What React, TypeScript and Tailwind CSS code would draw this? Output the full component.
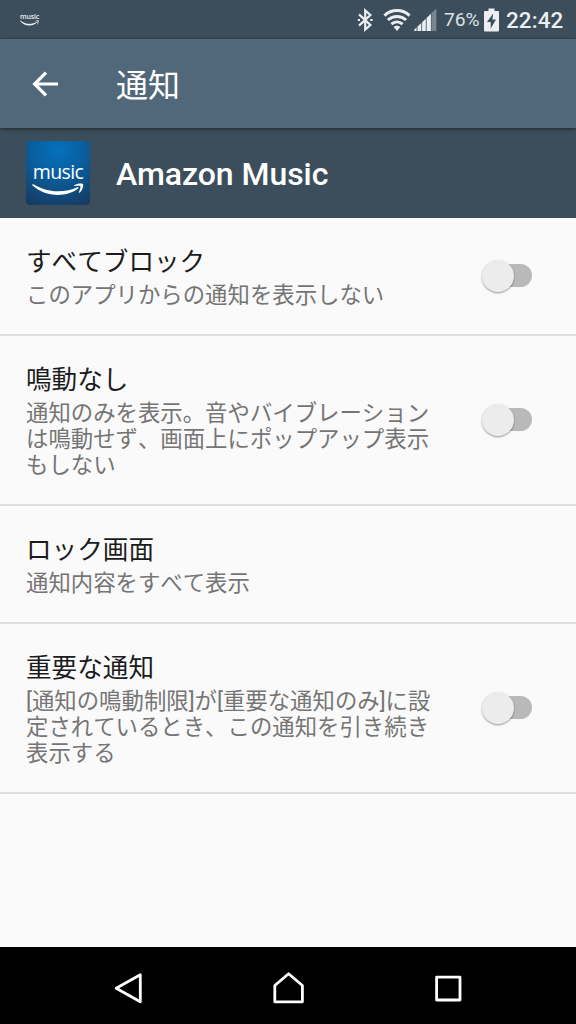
type Setting = {
  title: string;
  lines: string[];
  height: string;
  toggle: boolean;
};

const settings: Setting[] = [
  {
    title: "すべてブロック",
    lines: ["このアプリからの通知を表示しない"],
    height: "h-[118px]",
    toggle: true,
  },
  {
    title: "鳴動なし",
    lines: [
      "通知のみを表示。音やバイブレーション",
      "は鳴動せず、画面上にポップアップ表示",
      "もしない",
    ],
    height: "h-[170px]",
    toggle: true,
  },
  {
    title: "ロック画面",
    lines: ["通知内容をすべて表示"],
    height: "h-[118px]",
    toggle: false,
  },
  {
    title: "重要な通知",
    lines: [
      "[通知の鳴動制限]が[重要な通知のみ]に設",
      "定されているとき、この通知を引き続き",
      "表示する",
    ],
    height: "h-[170px]",
    toggle: true,
  },
];

function Smile({ className }: { className: string }) {
  return (
    <svg viewBox="0 0 52 13" preserveAspectRatio="none" className={className} fill="currentColor">
      <path d="M0.3 1.6C0.7 1 1.2 1.1 1.8 1.5C9 5.8 17 8.3 26 8.3C33 8.3 40 6.6 45.3 4.2C46.3 3.8 47 4.9 46.1 5.6C41 9.7 33.5 12 26 12C16 12 7 8.2 0.6 2.5C0.2 2.1 0.1 1.9 0.3 1.6Z" />
      <path d="M42.3 2.3C45 0.4 49.4 0.2 50.8 0.9C52 1.6 50.7 6.8 47.8 9.5C47.2 10 46.7 9.7 46.9 9.1C47.7 7.2 48.9 4.1 48.4 3.2C47.8 2.3 44.9 2.8 43 3C42.2 3.1 41.8 2.7 42.3 2.3Z" />
    </svg>
  );
}

function StatusBar() {
  return (
    <div className="flex h-[39px] items-center bg-[#3c4e5b] pl-5 text-[#eceff1]">
      <div className="flex w-[19px] flex-col items-center">
        <span className="font-['Open_Sans',sans-serif] text-[7px] font-semibold leading-[7px] tracking-[-0.2px]">
          music
        </span>
        <Smile className="h-[6px] w-[19px]" />
      </div>
      <svg viewBox="0 0 17 24" className="ml-[318px] h-6 w-[17px]" fill="none" stroke="currentColor" strokeWidth="2.2">
        <path d="M2 6.4L13.4 17L8.2 21.5V2.5L13.4 7L2 17.6" />
        <path d="M0.8 12h2.2M13.2 12h2.4" strokeWidth="2.2" />
      </svg>
      <svg viewBox="0 0 28 24" className="ml-[9px] h-6 w-7" fill="none" stroke="currentColor" strokeWidth="3">
        <path d="M1.4 7.6C8.6 0.9 19.4 0.9 26.6 7.6M4.9 12C10.2 7.3 17.8 7.3 23.1 12M8.4 16.2C11.8 13.3 16.2 13.3 19.6 16.2" />
        <path d="M10.6 19C12.5 17.4 15.5 17.4 17.4 19L14 23Z" fill="currentColor" stroke="none" />
      </svg>
      <svg viewBox="0 0 23 24" className="ml-[3px] h-6 w-[23px]" fill="currentColor">
        <path d="M0.3 23v-1.4L2.6 19.6V23ZM3.5 23v-4.4L7.3 15V23ZM8.1 23v-8.7l3.7-3.6V23ZM12.6 23V10L16.9 5.8V23Z" />
        <path d="M17.4 23V5.1L22.4 0.5V23Z" opacity=".35" />
      </svg>
      <span className="ml-[7px] w-[35px] whitespace-nowrap font-[Roboto,sans-serif] text-[19.2px] leading-none text-[#dce1e5]">
        76%
      </span>
      <svg viewBox="0 0 15 24" className="ml-[5px] h-6 w-[15px]">
        <path d="M4.5 0.5h6V3H14q1 0 1 1v18.5q0 1-1 1H1q-1 0-1-1V4q0-1 1-1h3.5Z" fill="#eceff1" />
        <path d="M9.2 5.6L3 14h3.7v6.4L12 11.4H8.4Z" fill="#3c4e5b" />
      </svg>
      <span className="ml-[7px] mt-px whitespace-nowrap font-[Roboto,sans-serif] text-[22.4px] font-medium leading-none tracking-[0.1px]">
        22:42
      </span>
    </div>
  );
}

function Switch() {
  return (
    <div className="flex w-[51px] items-center">
      <div className="z-10 size-8 shrink-0 rounded-full bg-[#ececec] shadow-[0_1px_2px_rgba(0,0,0,0.4)]" />
      <div className="-ml-6 mb-px h-[23px] w-[42px] shrink-0 rounded-full bg-[#b9b9b9]" />
    </div>
  );
}

function SettingRow({ setting }: { setting: Setting }) {
  return (
    <div className={`flex justify-between border-b-2 border-[#dfdfdf] pl-[26px] pr-[43px] ${setting.height}`}>
      <div className="whitespace-nowrap pt-[29px] [font-kerning:none]">
        <h2 className="text-[25.6px] leading-[30px] text-[#1c1c1c]">{setting.title}</h2>
        <p className="mt-[5px] text-[22.4px] leading-[26.2px] text-[#757575]">
          {setting.lines.map((line) => (
            <span key={line} className="block">
              {line}
            </span>
          ))}
        </p>
      </div>
      {setting.toggle && (
        <div className="flex items-center pb-px">
          <Switch />
        </div>
      )}
    </div>
  );
}

export default function App() {
  return (
    <div className="flex h-[1024px] w-[576px] flex-col overflow-hidden bg-[#fafafa] font-[Roboto,'Noto_Sans_CJK_JP',sans-serif]">
      <StatusBar />
      <header className="z-10 flex h-[89px] items-center bg-[#51677a] text-white shadow-[0_1px_4px_rgba(0,0,0,0.5)]">
        <svg viewBox="0 0 26 26" className="ml-8 size-[26px]" fill="none" stroke="currentColor" strokeWidth="3.2">
          <path d="M26 13H3M14 1.6L2.6 13L14 24.4" />
        </svg>
        <h1 className="ml-[58px] mt-[4px] text-[32px] leading-none">通知</h1>
      </header>
      <section className="flex h-[90px] items-center bg-[#3c4e5b] pl-[26px] text-white">
        <div className="flex size-16 flex-col items-center rounded-[4px] bg-[radial-gradient(circle_at_50%_15%,#0371bd_0%,#0a5f9f_40%,#18385c_100%)] pt-[18px]">
          <span className="font-['Open_Sans',sans-serif] text-[19.5px] leading-[26px] tracking-[-0.6px]">music</span>
          <Smile className="-mt-[2px] h-[13px] w-[52px]" />
        </div>
        <h2 className="ml-[26px] mt-[2px] text-[32px] font-medium leading-none tracking-[-0.05px]">Amazon Music</h2>
      </section>
      <main className="flex-1">
        {settings.map((setting) => (
          <SettingRow key={setting.title} setting={setting} />
        ))}
      </main>
      <nav className="flex h-[77px] items-center justify-between bg-black pl-[113px] pr-[112px] pt-[5px] text-white">
        <svg viewBox="0 0 32 32" className="size-8" fill="none" stroke="currentColor" strokeWidth="2.8" strokeLinejoin="round">
          <path d="M27.3 2.7V29.8L3.2 16.2Z" />
        </svg>
        <svg viewBox="0 0 32 32" className="size-8" fill="none" stroke="currentColor" strokeWidth="2.8" strokeLinejoin="round">
          <path d="M15.6 1.7L29.4 13.5V29.8H1.8V13.5Z" />
        </svg>
        <svg viewBox="0 0 32 32" className="size-8" fill="none" stroke="currentColor" strokeWidth="2.8" strokeLinejoin="round">
          <path d="M4.6 5.2H28V28H4.6Z" />
        </svg>
      </nav>
    </div>
  );
}
